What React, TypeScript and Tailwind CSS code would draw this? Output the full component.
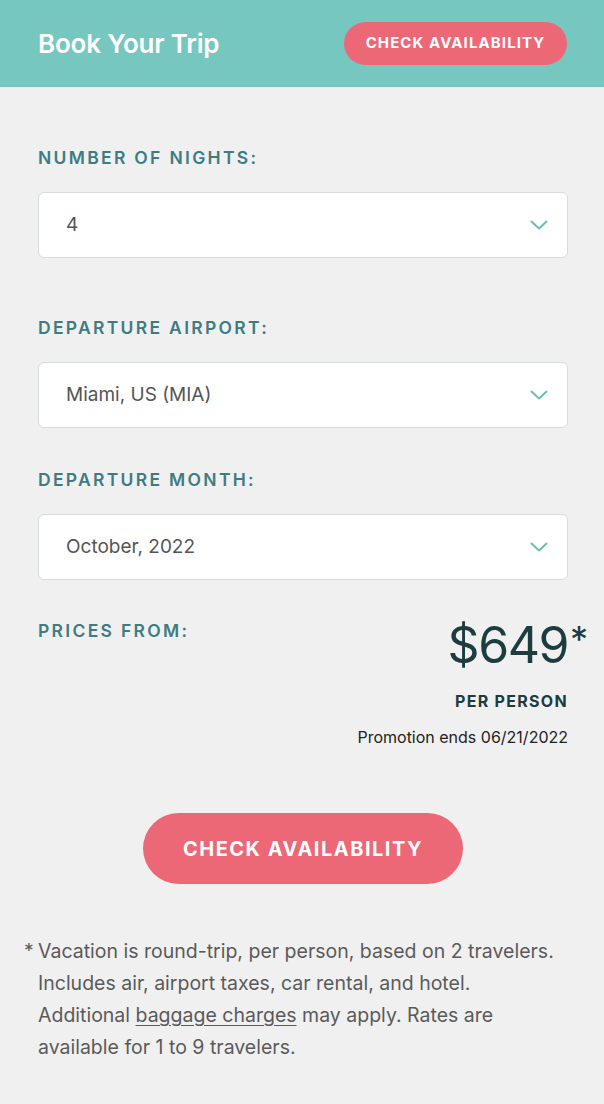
import React from "react";

function Chevron() {
  return (
    <svg width="18" height="10" viewBox="0 0 18 10" fill="none">
      <path d="M1.5 1.5 L9 8.5 L16.5 1.5" stroke="#6cbdb6" strokeWidth="2" strokeLinecap="round" strokeLinejoin="round" />
    </svg>
  );
}

function Select({ value }: { value: string }) {
  return (
    <div className="flex h-[66px] items-center justify-between rounded-[6px] border border-[#d6dcdc] bg-white pl-[27px] pr-[19px]">
      <span className="text-[19px] text-[#555555]">{value}</span>
      <Chevron />
    </div>
  );
}

function Label({ children }: { children: React.ReactNode }) {
  return (
    <div className="text-[17.5px] font-semibold leading-[24px] tracking-[2.3px] text-[#3d7c82]">{children}</div>
  );
}

export default function App() {
  return (
    <div className="min-h-[1104px] w-[604px] bg-[#f0f0f0] font-['Inter',sans-serif]">
      <div className="flex h-[87px] items-center justify-between bg-[#76c7c0] pl-[38px] pr-[37px]">
        <h1 className="text-[26px] font-semibold tracking-[-0.2px] text-white">Book Your Trip</h1>
        <button className="h-[43px] w-[223px] rounded-full bg-[#ec6877] text-[15px] font-bold tracking-[1.1px] text-white">
          CHECK AVAILABILITY
        </button>
      </div>
      <div className="pl-[38px] pr-[36px]">
        <div className="mt-[59px]">
          <Label>NUMBER OF NIGHTS:</Label>
        </div>
        <div className="mt-[22px]">
          <Select value="4" />
        </div>
        <div className="mt-[58px]">
          <Label>DEPARTURE AIRPORT:</Label>
        </div>
        <div className="mt-[22px]">
          <Select value="Miami, US (MIA)" />
        </div>
        <div className="mt-[40px]">
          <Label>DEPARTURE MONTH:</Label>
        </div>
        <div className="mt-[22px]">
          <Select value="October, 2022" />
        </div>
        <div className="mt-[39px] flex items-start justify-between">
          <Label>PRICES FROM:</Label>
          <div className="flex flex-col items-end">
            <div className="mr-[-20px] flex items-start text-[#1d3c40]">
              <span className="text-[50px] leading-[52px] tracking-[-1.5px]">$649</span>
              <span className="ml-[2px] mt-[3px] text-[36px] leading-[34px]">*</span>
            </div>
            <div className="mt-[20px] text-[16px] font-bold leading-[20px] tracking-[1.3px] text-[#1d3c40]">PER PERSON</div>
            <div className="mt-[15px] text-[16px] leading-[22px] text-[#222222]">Promotion ends 06/21/2022</div>
          </div>
        </div>
        <div className="mt-[65px] flex justify-center">
          <button className="h-[71px] w-[320px] rounded-full bg-[#ec6877] text-[20px] font-bold tracking-[1.5px] text-white">
            CHECK AVAILABILITY
          </button>
        </div>
      </div>
      <div className="relative mt-[51px] pl-[38px] pr-[10px] text-[19.5px] leading-[32px] text-[#5a5a5a]">
        <span className="absolute left-[24px] top-0">*</span>
        Vacation is round-trip, per person, based on 2 travelers.
        <br />
        Includes air, airport taxes, car rental, and hotel.
        <br />
        Additional <span className="underline underline-offset-[3px]">baggage charges</span> may apply. Rates are
        <br />
        available for 1 to 9 travelers.
      </div>
    </div>
  );
}
